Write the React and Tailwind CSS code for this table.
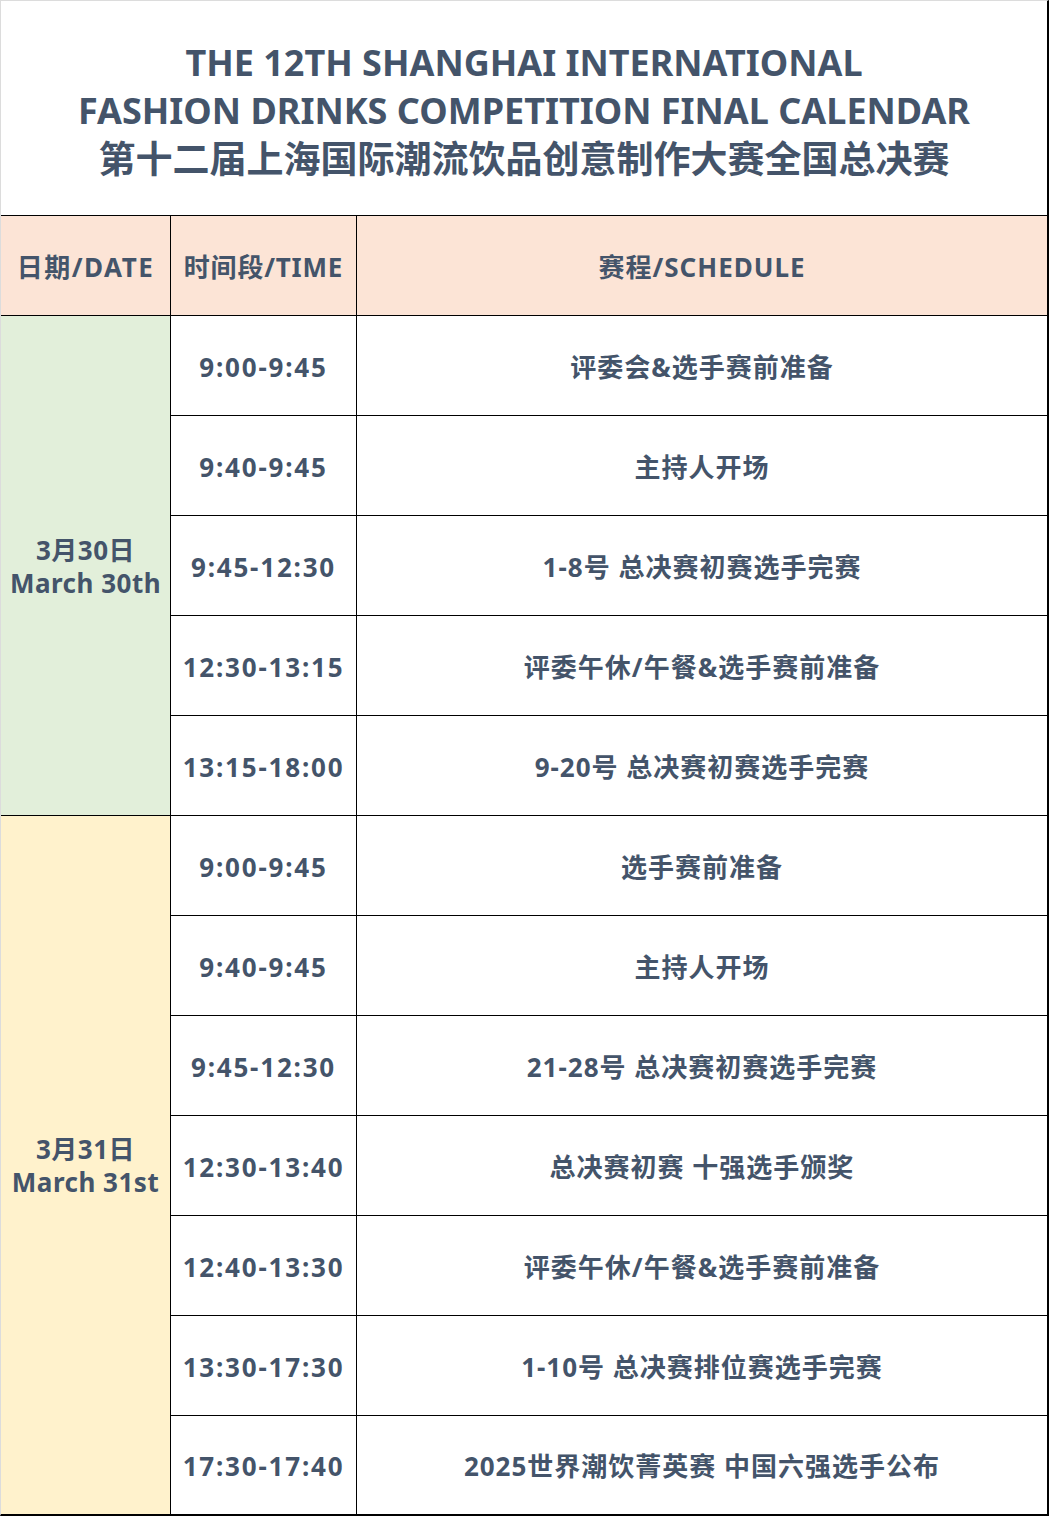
const FONT = { fontFamily: '"Noto Sans", "Open Sans", "Noto Sans CJK SC", sans-serif' };

const day1 = [
  ["9:00-9:45", "评委会&选手赛前准备"],
  ["9:40-9:45", "主持人开场"],
  ["9:45-12:30", "1-8号 总决赛初赛选手完赛"],
  ["12:30-13:15", "评委午休/午餐&选手赛前准备"],
  ["13:15-18:00", "9-20号 总决赛初赛选手完赛"],
];

const day2 = [
  ["9:00-9:45", "选手赛前准备"],
  ["9:40-9:45", "主持人开场"],
  ["9:45-12:30", "21-28号 总决赛初赛选手完赛"],
  ["12:30-13:40", "总决赛初赛 十强选手颁奖"],
  ["12:40-13:30", "评委午休/午餐&选手赛前准备"],
  ["13:30-17:30", "1-10号 总决赛排位赛选手完赛"],
  ["17:30-17:40", "2025世界潮饮菁英赛 中国六强选手公布"],
];

function Row({ time, item, last }) {
  return (
    <div className={`flex border-t border-black pt-[3px] ${last ? "h-[99px]" : "h-[100px]"}`}>
      <div className="w-[186px] shrink-0 border-r border-black flex items-center justify-center tracking-[1.8px] -mt-[3px] pt-[3px]">
        {time}
      </div>
      <div className="flex-1 flex items-center justify-center tracking-[1px]">{item}</div>
    </div>
  );
}

function DayGroup({ cn, en, rows, bg }) {
  return (
    <div className="flex border-t border-black">
      <div className={`w-[170px] shrink-0 border-r border-black flex flex-col items-center justify-center pt-[2px] leading-[33px] tracking-[0.5px] ${bg}`}>
        <span>{cn}</span>
        <span>{en}</span>
      </div>
      <div className="flex-1 -mt-px">
        {rows.map(([t, s], i) => (
          <Row key={i} time={t} item={s} last={i === rows.length - 1 && rows.length === 7} />
        ))}
      </div>
    </div>
  );
}

export default function App() {
  return (
    <div
      style={FONT}
      className="w-[1049px] h-[1516px] overflow-hidden bg-white border-l border-t border-[#dcdcdc] border-r-2 border-r-black border-b-2 border-b-black text-[#44546a] font-bold text-[26px]"
    >
      <div className="h-[214px] flex flex-col items-center justify-center pt-[5px] text-[36px] leading-[48px]">
        <div>THE 12TH SHANGHAI INTERNATIONAL</div>
        <div>FASHION DRINKS COMPETITION FINAL CALENDAR</div>
        <div className="text-[37px]">第十二届上海国际潮流饮品创意制作大赛全国总决赛</div>
      </div>

      <div className="flex h-[100px] border-t border-black bg-[#fce4d6] pt-[3px]">
        <div className="w-[170px] shrink-0 border-r border-black flex items-center justify-center tracking-[1.5px] -mt-[3px] pt-[3px]">
          日期/DATE
        </div>
        <div className="w-[186px] shrink-0 border-r border-black flex items-center justify-center tracking-[0.8px] -mt-[3px] pt-[3px]">
          时间段/TIME
        </div>
        <div className="flex-1 flex items-center justify-center tracking-[1px]">赛程/SCHEDULE</div>
      </div>

      <DayGroup cn="3月30日" en="March 30th" rows={day1} bg="bg-[#e2efda]" />
      <DayGroup cn="3月31日" en="March 31st" rows={day2} bg="bg-[#fff2cc]" />
    </div>
  );
}
